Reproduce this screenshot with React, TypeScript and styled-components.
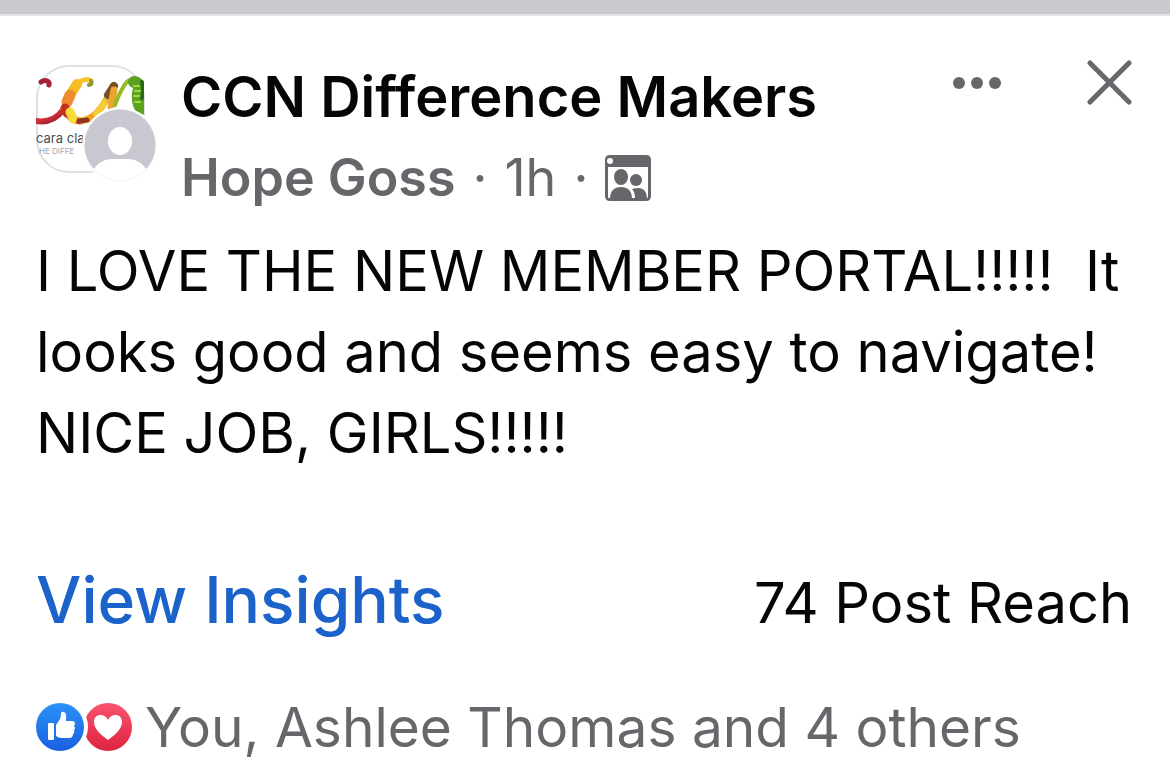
import React from 'react';
import styled, { createGlobalStyle } from 'styled-components';

const Global = createGlobalStyle`
  * { box-sizing: border-box; }
  body {
    margin: 0;
    background: #fff;
    color: #050505;
    font-family: Inter, "Liberation Sans", sans-serif;
  }
`;

const Strip = styled.div`
  height: 16px;
  background: #c9cad0;
  border-bottom: 2px solid #e4e5ea;
`;

const Post = styled.article`
  padding: 44px 38px 0 36px;
`;

const Header = styled.header`
  display: flex;
  align-items: flex-start;
`;

const Avatars = styled.div`
  flex: none;
  width: 124px;
  margin-right: 21px;
  padding-top: 2px;

  svg { display: block; }
`;

const Titles = styled.div`
  flex: 1;
  min-width: 0;
`;

const GroupName = styled.h1`
  margin: 0;
  font-size: 56px;
  line-height: 74px;
  font-weight: 600;
`;

const Byline = styled.div`
  display: flex;
  align-items: center;
  gap: 17px;
  margin-top: 8px;
  font-size: 52px;
  line-height: 72px;
  color: #65676b;
`;

const Author = styled.span`
  font-weight: 600;
`;

const Actions = styled.div`
  display: flex;
  align-items: center;
  gap: 84px;
`;

const IconButton = styled.button`
  display: block;
  padding: 0;
  border: 0;
  background: none;
  color: #65676b;
  cursor: pointer;

  svg { display: block; }
`;

const Message = styled.p`
  margin: 17px 0 0;
  font-size: 56px;
  line-height: 81px;
  white-space: pre-wrap;
`;

const Stats = styled.div`
  display: flex;
  align-items: baseline;
  justify-content: space-between;
  margin-top: 86px;
  line-height: 80px;
`;

const InsightsLink = styled.a`
  font-size: 64px;
  font-weight: 500;
  color: #1b63cb;
  text-decoration: none;
`;

const Reach = styled.span`
  font-size: 56px;
`;

const Reactions = styled.div`
  display: flex;
  align-items: center;
  gap: 12px;
  margin-top: 48px;
  font-size: 55px;
  line-height: 72px;
  color: #65676b;

  svg { flex: none; }
`;

function AvatarArt() {
  return (
    <svg width="124" height="120" viewBox="0 0 124 120" role="img" aria-label="Group and author">
      <defs>
        <clipPath id="logoBand"><rect x="0" y="0" width="108" height="120" /></clipPath>
        <clipPath id="person"><circle cx="84" cy="83" r="36" /></clipPath>
        <linearGradient id="red" x1="0" y1="0" x2="1" y2="1">
          <stop offset="0" stopColor="#8f2030" /><stop offset=".5" stopColor="#d5303c" /><stop offset="1" stopColor="#8c1d22" />
        </linearGradient>
        <linearGradient id="fruit" gradientUnits="userSpaceOnUse" x1="26" y1="56" x2="86" y2="18">
          <stop offset="0" stopColor="#a8201f" /><stop offset=".16" stopColor="#d8402c" />
          <stop offset=".24" stopColor="#f6d43a" /><stop offset=".36" stopColor="#f29a20" />
          <stop offset=".5" stopColor="#f7b825" /><stop offset=".62" stopColor="#e9c72f" />
          <stop offset=".8" stopColor="#e5982a" /><stop offset="1" stopColor="#7c4b22" />
        </linearGradient>
      </defs>
      <rect x="1" y="4" width="107" height="106" rx="32" fill="#fff" stroke="#e3e0e4" strokeWidth="2" />
      <g clipPath="url(#logoBand)" fill="none" strokeLinecap="round">
        <path d="M5 20C9 17 14 19 13 23" stroke="#a32335" strokeWidth="5" />
        <path d="M0 59C12 61 21 56 27 48" stroke="url(#red)" strokeWidth="6" />
        <path d="M27 47C31 40 34 29 41 22C45 18 51 16 55 19" stroke="#f7c52c" strokeWidth="5" />
        <path d="M55 19Q57 22 53 23" stroke="#8c9a35" strokeWidth="4" />
        <path d="M41 22L36 30" stroke="#f6bd25" strokeWidth="10" />
        <path d="M34 33L31 40" stroke="#f08a30" strokeWidth="11" />
        <path d="M29 46L31 51" stroke="#c2301f" strokeWidth="9" />
        <path d="M32 51Q34 58 44 59Q57 58 64 47Q72 37 77 24" stroke="url(#fruit)" strokeWidth="7" />
        <path d="M34 50L37 57" stroke="#f7db36" strokeWidth="9" />
        <path d="M43 59L51 58" stroke="#8e3421" strokeWidth="5" />
        <path d="M60 52L68 42" stroke="#f1cd35" strokeWidth="6" />
        <path d="M72 33L78 24" stroke="#795026" strokeWidth="8" />
        <path d="M78 28Q76 38 75 47" stroke="#e9a52f" strokeWidth="7" />
        <path d="M79 43Q84 29 90 21Q93 17 98 18" stroke="#92bd28" strokeWidth="4" />
        <path d="M98 20Q105 21 102 31Q101 40 105 47" stroke="#5ba221" strokeWidth="12" />
        <path d="M106 20Q108 29 106 36" stroke="#286a19" strokeWidth="4" />
        <path d="M98 24h5M99 29h5M98 34h5M99 40h5" stroke="#a5d944" strokeWidth="2" />
      </g>
      <g fontFamily="Inter, sans-serif">
        <text x="0" y="81" fontSize="13" fill="#4d4d50">cara cla</text>
        <text x="3" y="92" fontSize="8" fill="#aaa6ab">HE DIFFE</text>
      </g>
      <circle cx="84" cy="83" r="38" fill="#fff" />
      <circle cx="84" cy="83" r="36" fill="#c7c8d0" />
      <g clipPath="url(#person)" fill="#fff">
        <ellipse cx="84" cy="79" rx="12" ry="14" />
        <path d="M56 109C63 100 68 97 77 97H91C100 97 105 100 112 109V123H56Z" />
      </g>
      <circle cx="84" cy="83" r="36" fill="none" stroke="#f7f7f8" strokeWidth="1" />
    </svg>
  );
}

function GroupIcon() {
  return (
    <svg width="46" height="46" viewBox="0 0 46 46" role="img" aria-label="Group members">
      <path fill="#65676b" fillRule="evenodd" d="M5 0H41Q46 0 46 5V41Q46 46 41 46H5Q0 46 0 41V5Q0 0 5 0ZM3 12V42Q3 43 4 43H42Q43 43 43 42V12Z" />
      <circle cx="5" cy="6" r="3" fill="#fff" />
      <g fill="#65676b">
        <ellipse cx="16" cy="22" rx="7" ry="8" />
        <ellipse cx="31" cy="25" rx="6" ry="6" />
        <path d="M5 44C5 36 9 32 16 32S27 36 27 44Z" />
        <path d="M27 34C36 31 42 34 42 44H30C30 39 29 36 27 34Z" />
      </g>
    </svg>
  );
}

function ReactionIcons() {
  return (
    <svg width="97" height="50" viewBox="0 0 97 50" role="img" aria-label="Like and love">
      <defs>
        <linearGradient id="like" x1="0" y1="0" x2="0" y2="1"><stop stopColor="#2b92f7" /><stop offset="1" stopColor="#1a5fe0" /></linearGradient>
        <linearGradient id="love" x1="0" y1="0" x2="0" y2="1"><stop stopColor="#f9536f" /><stop offset="1" stopColor="#dd2440" /></linearGradient>
      </defs>
      <circle cx="72" cy="25" r="24" fill="url(#love)" />
      <circle cx="24" cy="25" r="28" fill="#fff" />
      <circle cx="24" cy="25" r="24" fill="url(#like)" />
      <path fill="#fff" d="M13 21H17Q18 21 18 22V37Q18 38 17 38H13Q12 38 12 37V22Q12 21 13 21ZM20 23L24 17Q25 15 25 11Q26 9 28 10Q31 11 30 19H36Q39 19 39 22L38 24Q40 26 38 28Q39 31 37 32Q37 36 33 36H26Q22 36 20 34Z" />
      <path fill="#fff" d="M72 38C65 33 58 27 58 20C58 11 69 11 72 18C75 11 86 11 86 20C86 27 79 33 72 38Z" />
    </svg>
  );
}

export default function App() {
  return (
    <>
      <Global />
      <Strip />
      <Post>
        <Header>
          <Avatars><AvatarArt /></Avatars>
          <Titles>
            <GroupName>CCN Difference Makers</GroupName>
            <Byline>
              <Author>Hope Goss</Author>
              <span>·</span>
              <span>1h</span>
              <span>·</span>
              <GroupIcon />
            </Byline>
          </Titles>
          <Actions>
            <IconButton type="button" aria-label="More options">
              <svg width="50" height="42" viewBox="0 0 50 42" fill="currentColor">
                <circle cx="7" cy="21" r="6" /><circle cx="25" cy="21" r="6" /><circle cx="43" cy="21" r="6" />
              </svg>
            </IconButton>
            <IconButton type="button" aria-label="Close">
              <svg width="46" height="46" viewBox="0 0 46 46" fill="none" stroke="currentColor" strokeWidth="5" strokeLinecap="round">
                <path d="M4 3L43 42M43 3L4 42" />
              </svg>
            </IconButton>
          </Actions>
        </Header>
        <Message>{'I LOVE THE NEW MEMBER PORTAL!!!!!  It looks good and seems easy to navigate! NICE JOB, GIRLS!!!!!'}</Message>
        <Stats>
          <InsightsLink href="#insights">View Insights</InsightsLink>
          <Reach>74 Post Reach</Reach>
        </Stats>
        <Reactions>
          <ReactionIcons />
          <span>You, Ashlee Thomas and 4 others</span>
        </Reactions>
      </Post>
    </>
  );
}
